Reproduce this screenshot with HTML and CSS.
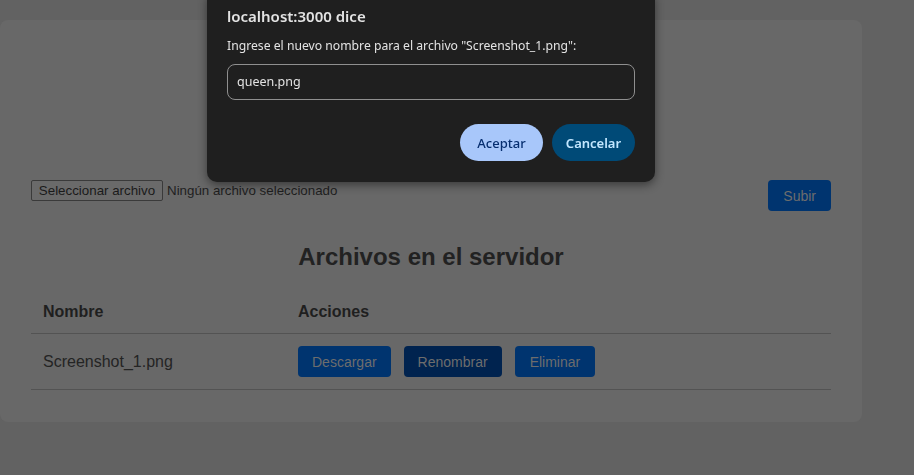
FILE: index.html
```html
<!DOCTYPE html>
<html lang="es">
<head>
<meta charset="utf-8">
<title>Archivos</title>
<link rel="stylesheet" href="styles.css">
</head>
<body>
<main class="card">
  <div class="title-wrap"><h1 class="title">Gestor de Archivos en la Nube</h1></div>
  <form class="upload">
    <div class="file-pick">
      <span class="file-btn">Seleccionar archivo</span>
      <span class="file-name">Ningún archivo seleccionado</span>
    </div>
    <button type="button" class="btn">Subir</button>
  </form>
  <h2 class="list-title">Archivos en el servidor</h2>
  <table class="files">
    <thead>
      <tr><th class="col-name">Nombre</th><th>Acciones</th></tr>
    </thead>
    <tbody>
      <tr>
        <td>Screenshot_1.png</td>
        <td>
          <div class="actions">
            <button type="button" class="btn btn-sm">Descargar</button>
            <button type="button" class="btn btn-sm btn-dark">Renombrar</button>
            <button type="button" class="btn btn-sm btn-wide">Eliminar</button>
          </div>
        </td>
      </tr>
    </tbody>
  </table>
</main>

<div class="dialog" role="dialog">
  <div class="dlg-title">localhost:3000 dice</div>
  <div class="dlg-msg">Ingrese el nuevo nombre para el archivo "Screenshot_1.png":</div>
  <div class="dlg-input">queen.png</div>
  <div class="dlg-actions">
    <button type="button" class="dlg-btn dlg-ok">Aceptar</button>
    <button type="button" class="dlg-btn dlg-cancel">Cancelar</button>
  </div>
</div>
</body>
</html>
```

FILE: styles.css
```css
* { box-sizing: border-box; }
html, body { margin: 0; }
body {
  background: #626262;
  font-family: "Liberation Sans", Arial, sans-serif;
  color: #232323;
  padding-top: 20px;
  height: 475px;
  overflow: hidden;
}
.card {
  width: 862px;
  background: #686868;
  border-radius: 8px;
  padding: 0 31px 32px 31px;
}
.title-wrap {
  text-align: center;
  padding-top: 60px;
}
.title {
  display: inline-block;
  margin: 0;
  font-size: 26px;
  line-height: 21px;
  font-weight: bold;
  color: #0a2a4c;
  border-left: 2px solid #6b4a22;
  padding-left: 12px;
  white-space: nowrap;
}
.upload {
  display: flex;
  justify-content: space-between;
  align-items: flex-start;
  margin-top: 77px;
}
.file-pick {
  display: flex;
  align-items: center;
  font-size: 13.33px;
}
.file-btn {
  display: inline-block;
  width: 132px;
  height: 21px;
  line-height: 19px;
  text-align: center;
  border: 1px solid #3a3a3a;
  border-radius: 2px;
  background: #6a6a6a;
  color: #1a1a1a;
  margin-right: 4px;
}
.file-name { color: #1f1f1f; }
.btn {
  height: 31px;
  padding: 0 15px;
  border: none;
  border-radius: 4px;
  background: #00346f;
  color: #6d6d6d;
  font-family: "Liberation Sans", Arial, sans-serif;
  font-size: 14px;
}
.btn-sm { padding: 0 14px; }
.btn-wide { padding: 0 15px; }
.btn-dark { background: #00234f; }
.list-title {
  text-align: center;
  font-size: 24px;
  font-weight: bold;
  margin: 32px 0 20px;
  line-height: 28px;
  color: #222222;
}
.files {
  width: 800px;
  border-collapse: collapse;
}
.files th, .files td {
  text-align: left;
  padding: 12px;
  border-bottom: 1px solid #535353;
  font-size: 16px;
}
.files th { line-height: 18px; color: #1f1f1f; }
.files td { line-height: 31px; color: #242424; }
.col-name { width: 267px; }
.files th + th, .files td + td { padding-left: 0; }
.actions { display: flex; gap: 13px; }

.dialog {
  position: fixed;
  top: -10px;
  left: 207px;
  width: 448px;
  background: #1f1f1f;
  border-radius: 10px;
  padding: 16px 20px 21px;
  box-shadow: 0 3px 10px rgba(0, 0, 0, 0.45);
  font-family: "Noto Sans", "Open Sans", sans-serif;
  color: #e3e3e3;
}
.dlg-title {
  font-size: 15px;
  line-height: 20px;
  font-weight: 600;
}
.dlg-msg {
  font-size: 12.2px;
  line-height: 18px;
  margin-top: 11px;
}
.dlg-input {
  margin-top: 9px;
  height: 36px;
  border: 1px solid #8f8f8f;
  border-radius: 8px;
  padding: 0 9px;
  font-size: 12.5px;
  line-height: 34px;
  color: #e3e3e3;
}
.dlg-actions {
  display: flex;
  justify-content: flex-end;
  gap: 9px;
  margin-top: 24px;
}
.dlg-btn {
  width: 83px;
  height: 37px;
  border: none;
  border-radius: 19px;
  font-family: "Noto Sans", "Open Sans", sans-serif;
  font-size: 13px;
  font-weight: 500;
}
.dlg-ok { background: #a8c7fa; color: #062e6f; }
.dlg-cancel { background: #004a77; color: #c2e7ff; font-weight: 600; }
```
